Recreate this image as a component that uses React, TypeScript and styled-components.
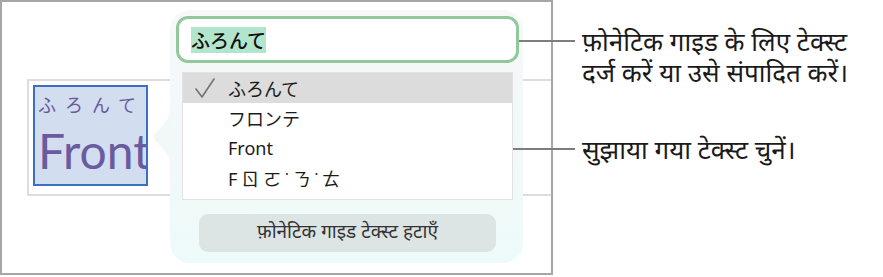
import React from "react";
import styled, { createGlobalStyle } from "styled-components";

const GlobalStyle = createGlobalStyle`
  html, body {
    margin: 0;
    padding: 0;
    background: #ffffff;
  }
  body {
    font-family: "Noto Sans", "Noto Sans Devanagari", sans-serif;
    color: #1a1a1a;
  }
`;

const Stage = styled.div`
  display: flex;
  align-items: flex-start;
  width: 883px;
  height: 277px;
  overflow: hidden;
`;

const Frame = styled.div`
  position: relative;
  flex: none;
  box-sizing: border-box;
  width: 553px;
  height: 275px;
  border: 2px solid #a6a6a6;
  padding: 77px 0 0 25px;
  overflow: hidden;
`;

const DocBox = styled.div`
  box-sizing: border-box;
  width: 620px;
  height: 117px;
  border: 2px solid #dddddd;
  padding: 4px;
`;

const Selection = styled.div`
  box-sizing: border-box;
  width: 115px;
  height: 101px;
  background: #d2ddef;
  border: 2px solid #3c6fbf;
  padding: 5px 0 0 3px;
  overflow: hidden;
  color: #6a5a9e;
  font-family: "Lato", "Open Sans", sans-serif;
`;

const Ruby = styled.div`
  font-family: "Noto Sans CJK JP", sans-serif;
  font-size: 18px;
  line-height: 24px;
  letter-spacing: 9px;
  white-space: nowrap;
`;

const BaseText = styled.div`
  margin-top: 7px;
  font-size: 48px;
  font-weight: 400;
  line-height: 56px;
  white-space: nowrap;
`;

const Popover = styled.div`
  position: absolute;
  left: 168px;
  top: 8px;
  box-sizing: border-box;
  width: 353px;
  height: 253px;
  border-radius: 20px;
  background: linear-gradient(180deg, #f6f8f9 0%, #f2f8f8 55%, #edfbfa 100%);
  padding: 6px 4px 0 6px;
  display: flex;
  flex-direction: column;
`;

const Arrow = styled.svg`
  position: absolute;
  left: -17px;
  top: 97px;
`;

const Field = styled.div`
  box-sizing: border-box;
  height: 47px;
  border: 3px solid #91c99c;
  border-radius: 12px;
  background: #ffffff;
  display: flex;
  align-items: center;
  padding: 0 12px;
`;

const Highlight = styled.span`
  background: #b3e5cc;
  font-family: "Noto Sans CJK JP", sans-serif;
  font-size: 19px;
  font-weight: 500;
  line-height: 26px;
  color: #111111;
`;

const List = styled.div`
  margin: 9px 6px 0 6px;
  height: 128px;
  box-sizing: border-box;
  border: 1px solid #e3e3e3;
  background: #ffffff;
`;

const Row = styled.div<{ $active?: boolean }>`
  display: flex;
  align-items: center;
  height: 30px;
  background: ${(p) => (p.$active ? "#dcdcdc" : "transparent")};
  font-size: 18px;
  color: #1c1c1c;
`;

const CheckSlot = styled.span`
  display: flex;
  align-items: center;
  width: 45px;
  padding-left: 12px;
  box-sizing: border-box;
`;

const Label = styled.span<{ $spaced?: boolean }>`
  white-space: nowrap;
  font-family: "Noto Sans", "Noto Sans CJK JP", "Noto Sans CJK TC", sans-serif;
  letter-spacing: ${(p) => (p.$spaced ? "4px" : "0")};
`;

const RemoveButton = styled.button`
  align-self: center;
  margin-top: 14px;
  width: 297px;
  height: 38px;
  border: none;
  border-radius: 9px;
  background: #dde4e4;
  color: #333333;
  font-family: "Noto Sans Devanagari", "Noto Sans", sans-serif;
  font-size: 19px;
  cursor: pointer;
`;

const Notes = styled.div`
  display: flex;
  flex-direction: column;
  gap: 46px;
  padding: 30px 0 0 29px;
`;

const Note = styled.div<{ $lead: number }>`
  position: relative;
  font-family: "Noto Sans Devanagari", "Noto Sans", sans-serif;
  font-size: 26px;
  line-height: 31px;
  color: #1a1a1a;
  white-space: nowrap;

  &::before {
    content: "";
    position: absolute;
    top: 10px;
    left: ${(p) => -p.$lead - 7}px;
    width: ${(p) => p.$lead}px;
    height: 2px;
    background: #7d7d7d;
  }
`;

const CheckIcon = () => (
  <svg width="20" height="20" viewBox="0 0 20 20">
    <path
      d="M1 11 L7 19 L19 1"
      fill="none"
      stroke="#737373"
      strokeWidth="1.6"
      strokeLinejoin="round"
      strokeLinecap="round"
    />
  </svg>
);

const suggestions = [
  { text: "ふろんて", active: true },
  { text: "フロンテ" },
  { text: "Front" },
  { text: "Fㄖㄛ˙ㄋ˙ㄊ", spaced: true },
];

export default function App() {
  return (
    <>
      <GlobalStyle />
      <Stage>
        <Frame>
          <DocBox>
            <Selection>
              <Ruby>ふろんて</Ruby>
              <BaseText>Front</BaseText>
            </Selection>
          </DocBox>
          <Popover>
            <Arrow width="18" height="60" viewBox="0 0 18 60">
              <path
                d="M18 0 C18 16 1 24 1 30 C1 36 18 44 18 60 Z"
                fill="#f2f7f7"
              />
            </Arrow>
            <Field>
              <Highlight>ふろんて</Highlight>
            </Field>
            <List>
              {suggestions.map((s) => (
                <Row key={s.text} $active={s.active}>
                  <CheckSlot>{s.active && <CheckIcon />}</CheckSlot>
                  <Label $spaced={s.spaced}>{s.text}</Label>
                </Row>
              ))}
            </List>
            <RemoveButton>फ़ोनेटिक गाइड टेक्स्ट हटाएँ</RemoveButton>
          </Popover>
        </Frame>
        <Notes>
          <Note $lead={56}>
            फ़ोनेटिक गाइड के लिए टेक्स्ट
            <br />
            दर्ज करें या उसे संपादित करें।
          </Note>
          <Note $lead={62}>सुझाया गया टेक्स्ट चुनें।</Note>
        </Notes>
      </Stage>
    </>
  );
}
